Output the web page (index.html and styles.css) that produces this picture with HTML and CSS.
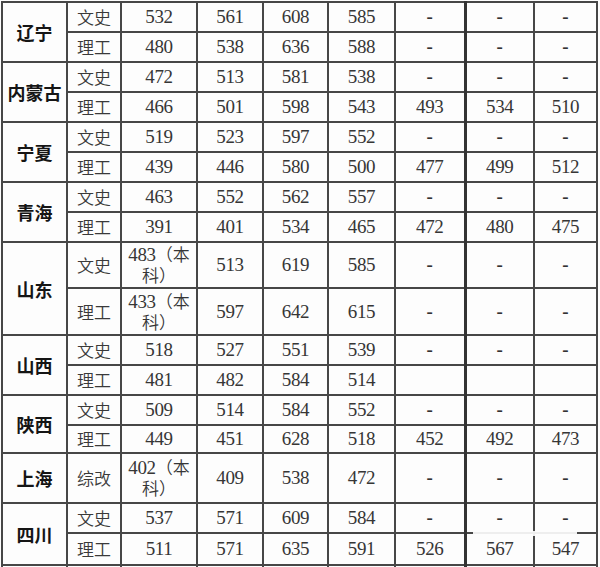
FILE: index.html
```html
<!DOCTYPE html>
<html lang="zh-CN">
<head>
<meta charset="utf-8">
<title>分数线</title>
<link rel="stylesheet" href="styles.css">
</head>
<body>
<div class="page">
<table class="scores">
  <colgroup>
    <col class="c-prov"><col class="c-type"><col class="c-a"><col class="c-b"><col class="c-c"><col class="c-d"><col class="c-e"><col class="c-f"><col class="c-g">
  </colgroup>
  <tbody>
    <tr class="h30"><th rowspan="2" class="prov">辽宁</th><td class="type">文史</td><td>532</td><td>561</td><td>608</td><td>585</td><td class="dash">-</td><td class="dash thick">-</td><td class="dash">-</td></tr>
    <tr class="h30 sub"><td class="type">理工</td><td>480</td><td>538</td><td>636</td><td>588</td><td class="dash">-</td><td class="dash thick">-</td><td class="dash">-</td></tr>

    <tr class="h30"><th rowspan="2" class="prov">内蒙古</th><td class="type">文史</td><td>472</td><td>513</td><td>581</td><td>538</td><td class="dash">-</td><td class="dash thick">-</td><td class="dash">-</td></tr>
    <tr class="h30 sub"><td class="type">理工</td><td>466</td><td>501</td><td>598</td><td>543</td><td>493</td><td class="thick">534</td><td>510</td></tr>

    <tr class="h30"><th rowspan="2" class="prov">宁夏</th><td class="type">文史</td><td>519</td><td>523</td><td>597</td><td>552</td><td class="dash">-</td><td class="dash thick">-</td><td class="dash">-</td></tr>
    <tr class="h30 sub"><td class="type">理工</td><td>439</td><td>446</td><td>580</td><td>500</td><td>477</td><td class="thick">499</td><td>512</td></tr>

    <tr class="h30"><th rowspan="2" class="prov">青海</th><td class="type">文史</td><td>463</td><td>552</td><td>562</td><td>557</td><td class="dash">-</td><td class="dash thick">-</td><td class="dash">-</td></tr>
    <tr class="h30 sub"><td class="type">理工</td><td>391</td><td>401</td><td>534</td><td>465</td><td>472</td><td class="thick">480</td><td>475</td></tr>

    <tr class="h46"><th rowspan="2" class="prov">山东</th><td class="type">文史</td><td class="two">483<span class="cjk">（本<br>科）</span></td><td>513</td><td>619</td><td>585</td><td class="dash">-</td><td class="dash thick">-</td><td class="dash">-</td></tr>
    <tr class="h47 sub"><td class="type">理工</td><td class="two">433<span class="cjk">（本<br>科）</span></td><td>597</td><td>642</td><td>615</td><td class="dash">-</td><td class="dash thick">-</td><td class="dash">-</td></tr>

    <tr class="h30"><th rowspan="2" class="prov">山西</th><td class="type">文史</td><td>518</td><td>527</td><td>551</td><td>539</td><td class="dash">-</td><td class="dash thick">-</td><td class="dash">-</td></tr>
    <tr class="h30 sub"><td class="type">理工</td><td>481</td><td>482</td><td>584</td><td>514</td><td></td><td class="thick"></td><td></td></tr>

    <tr class="h30"><th rowspan="2" class="prov">陕西</th><td class="type">文史</td><td>509</td><td>514</td><td>584</td><td>552</td><td class="dash">-</td><td class="dash thick">-</td><td class="dash">-</td></tr>
    <tr class="h28 sub"><td class="type">理工</td><td>449</td><td>451</td><td>628</td><td>518</td><td>452</td><td class="thick">492</td><td>473</td></tr>

    <tr class="h50"><th class="prov">上海</th><td class="type">综改</td><td class="two">402<span class="cjk">（本<br>科）</span></td><td>409</td><td>538</td><td>472</td><td class="dash">-</td><td class="dash thick">-</td><td class="dash">-</td></tr>

    <tr class="h30"><th rowspan="2" class="prov">四川</th><td class="type">文史</td><td>537</td><td>571</td><td>609</td><td>584</td><td class="dash">-</td><td class="dash thick">-</td><td class="dash">-</td></tr>
    <tr class="h32 sub"><td class="type">理工</td><td>511</td><td>571</td><td>635</td><td>591</td><td>526</td><td class="thick">567</td><td>547</td></tr>
    <tr class="h30 cut"><td></td><td></td><td></td><td></td><td></td><td></td><td></td><td class="thick"></td><td></td></tr>
  </tbody>
</table>
<div class="watermark"></div>
</div>
</body>
</html>
```
FILE: styles.css
```css
html, body {
  margin: 0;
  padding: 0;
  background: #fdfdfd;
}
.page {
  position: relative;
  width: 600px;
  height: 567px;
  overflow: hidden;
}
.scores {
  border-collapse: collapse;
  table-layout: fixed;
  width: 596px;
  margin: 1px 0 0 1px;
  font-family: "Liberation Serif", "Noto Sans CJK SC", serif;
  font-size: 19px;
  letter-spacing: -0.4px;
  color: #363636;
}
.c-prov { width: 65px; }
.c-type { width: 54px; }
.c-a { width: 76px; }
.c-b { width: 66px; }
.c-c { width: 65px; }
.c-d { width: 67px; }
.c-e { width: 70px; }
.c-f { width: 69px; }
.c-g { width: 63px; }

.scores td, .scores th {
  border: 2px solid #474747;
  padding: 0;
  text-align: center;
  vertical-align: middle;
  line-height: 20px;
  overflow: hidden;
  white-space: nowrap;
}
.scores td.thick {
  border-left: 3px solid #333;
}
.h28 { height: 28px; }
.h30 { height: 30px; }
.h32 { height: 32px; }
.h46 { height: 46px; }
.h47 { height: 47px; }
.h50 { height: 50px; }

.prov {
  font-family: "Noto Sans CJK SC", sans-serif;
  font-weight: 700;
  font-size: 18px;
  color: #151515;
  letter-spacing: 0;
}
.type {
  font-family: "Noto Sans CJK SC", sans-serif;
  font-weight: 350;
  font-size: 17px;
  color: #3a3a3a;
  letter-spacing: 0;
}
.cjk {
  font-family: "Noto Sans CJK SC", sans-serif;
  font-weight: 350;
  font-size: 17px;
  letter-spacing: 0;
}
.two {
  white-space: normal;
}
.dash {
  font-weight: 700;
  color: #333;
  letter-spacing: 0;
}
.watermark {
  position: absolute;
  left: 473px;
  top: 531px;
  width: 104px;
  height: 5px;
  background: rgba(253, 253, 253, 0.92);
}
```
